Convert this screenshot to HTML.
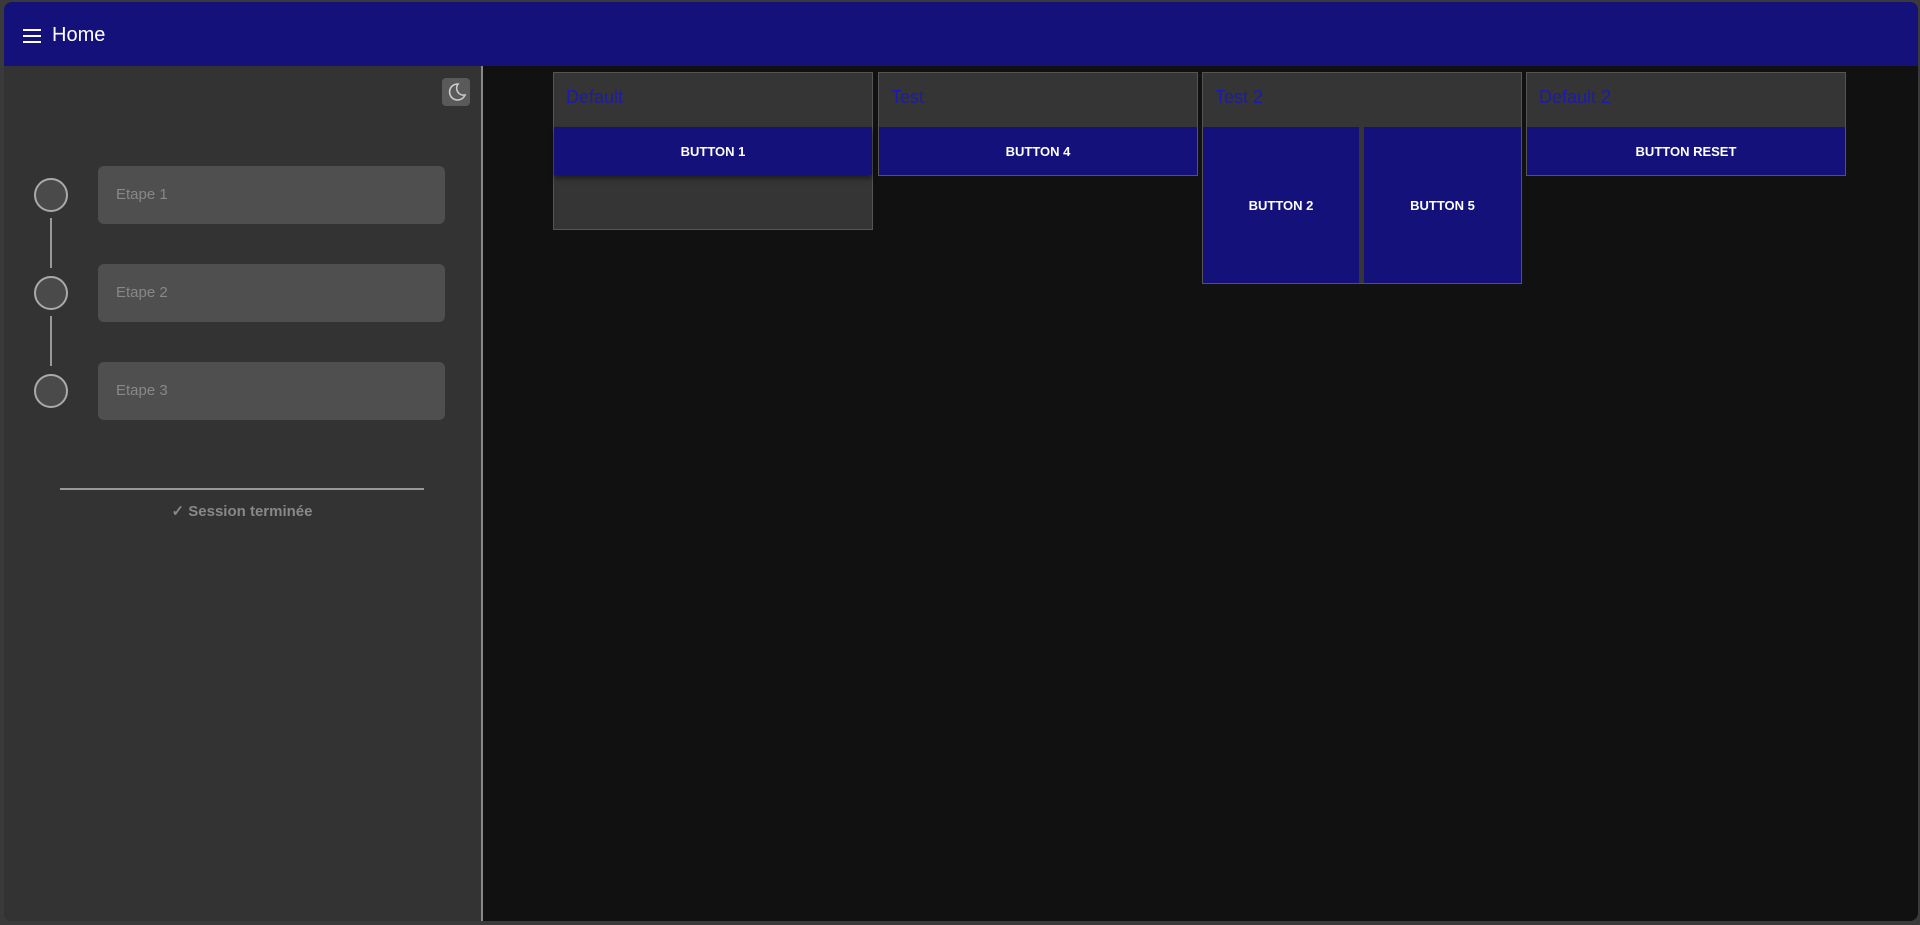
<!DOCTYPE html>
<html><head><meta charset="utf-8"><style>
*{box-sizing:border-box;margin:0;padding:0}
body{width:1920px;height:925px;background:#3a3a3a;font-family:"Liberation Sans",sans-serif;position:relative;overflow:hidden}
.win{position:absolute;left:4px;top:2px;width:1914px;height:919px;background:#111;border-radius:8px;overflow:hidden}
.hdr{position:absolute;left:0;top:0;width:1914px;height:64px;background:#14117a}
.hdr .t{position:absolute;left:48px;top:22px;color:#fff;font-size:20px}
.side{position:absolute;left:0;top:64px;width:479px;height:860px;background:#333;border-right:2px solid #888}
.moon{position:absolute;left:438px;top:12px;width:28px;height:28px;background:#5a5a5a;border-radius:4px}
.circ{position:absolute;left:30px;width:34px;height:34px;border-radius:50%;border:2px solid #aaa;background:#4a4a4a}
.vl{position:absolute;left:46px;width:2px;background:#999}
.box{position:absolute;left:94px;width:347px;height:58px;background:#4f4f4f;border-radius:6px;color:#888;font-size:15px;padding-left:18px;line-height:58px}
.hr{position:absolute;left:56px;top:422px;width:364px;height:2px;background:#999}
.done{position:absolute;left:0;width:476px;top:436px;text-align:center;color:#888;font-weight:bold;font-size:15px}
.card{position:absolute;top:70px;width:320px;background:#353535;border:1px solid #555}
.card .ti{height:54px;color:#1c1ab0;font-size:18px;padding:14px 0 0 12px}
.btn{background:#14117a;color:#fff;font-weight:bold;font-size:13px;display:flex;align-items:center;justify-content:center}
</style></head><body>
<div class="win">
<div class="hdr">
<svg style="position:absolute;left:19px;top:27px" width="20" height="14"><rect y="0" width="18" height="2" fill="#fff"/><rect y="6" width="18" height="2" fill="#fff"/><rect y="12" width="18" height="2" fill="#fff"/></svg>
<div class="t">Home</div></div>
<div class="side">
<div class="moon"><svg width="28" height="28" viewBox="0 0 28 28"><path d="M16 6a8 8 0 1 0 7 11a7 7 0 0 1 -7 -11z" fill="none" stroke="#ccc" stroke-width="1.6"/></svg></div>
<div class="circ" style="top:112px"></div>
<div class="vl" style="top:152px;height:50px"></div>
<div class="circ" style="top:210px"></div>
<div class="vl" style="top:250px;height:50px"></div>
<div class="circ" style="top:308px"></div>
<div class="box" style="top:100px">Etape 1</div>
<div class="box" style="top:198px">Etape 2</div>
<div class="box" style="top:296px">Etape 3</div>
<div class="hr"></div>
<div class="done">✓ Session terminée</div>
</div>
<div class="card" style="left:549px;height:158px"><div class="ti">Default</div><div class="btn" style="height:48px;box-shadow:0 3px 5px rgba(0,0,0,.5)">BUTTON 1</div></div>
<div class="card" style="left:874px;height:104px"><div class="ti">Test</div><div class="btn" style="height:48px">BUTTON 4</div></div>
<div class="card" style="left:1198px;height:212px"><div class="ti">Test 2</div><div style="display:flex;justify-content:space-between"><div class="btn" style="width:156px;height:156px">BUTTON 2</div><div class="btn" style="width:157px;height:156px">BUTTON 5</div></div></div>
<div class="card" style="left:1522px;height:104px"><div class="ti">Default 2</div><div class="btn" style="height:48px">BUTTON RESET</div></div>
</div>
</body></html>
